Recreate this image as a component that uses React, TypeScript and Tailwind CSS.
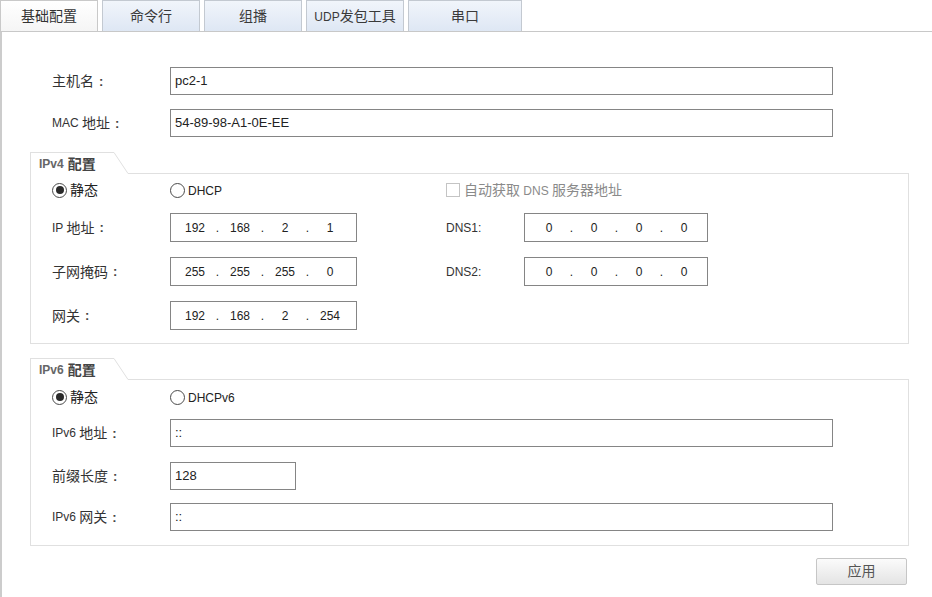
import React from "react";

function Mixed({ text, cjk = "text-[14px]", latin = "text-[12px]" }: { text: string; cjk?: string; latin?: string }) {
  const parts = text.split(/([\u3000-\u9fff\uff00-\uffef]+)/).filter((p) => p.length > 0);
  return (
    <>
      {parts.map((p, i) =>
        /[\u3000-\u9fff\uff00-\uffef]/.test(p) ? (
          <span key={i} className={cjk}>{p}</span>
        ) : (
          <span key={i} className={`${latin} whitespace-pre`}>{p}</span>
        )
      )}
    </>
  );
}

function Tab({ label, active, w }: { label: string; active?: boolean; w: string }) {
  return (
    <div
      className={`${w} h-full flex items-center justify-center border border-b-0 ${
        active
          ? "bg-gradient-to-b from-white to-[#f5f5f5] border-[#c9c9c9] text-[#333]"
          : "bg-gradient-to-b from-[#f1f5fb] to-[#dee7f4] border-[#c3c9d1] text-[#3a3a3a]"
      }`}
    >
      <span className="leading-none">
        <Mixed text={label} />
      </span>
    </div>
  );
}

function TextInput({ value, w }: { value: string; w: string }) {
  return (
    <div className={`${w} h-[28px] border border-[#858585] bg-white flex items-center pl-[4px] text-[13px] text-[#222]`}>
      {value}
    </div>
  );
}

function IpInput({ parts, w }: { parts: string[]; w: string }) {
  return (
    <div className={`${w} h-[29px] border border-[#858585] bg-white flex items-center pl-[6px] text-[12px] text-[#222]`}>
      {parts.map((p, i) => (
        <React.Fragment key={i}>
          {i > 0 && <span className="w-[9px] text-center">.</span>}
          <span className="w-[36px] text-center">{p}</span>
        </React.Fragment>
      ))}
    </div>
  );
}

function Label({ text, colon = true }: { text: string; colon?: boolean }) {
  return (
    <div className="text-[#333] leading-none flex items-center">
      <Mixed text={text} />
      {colon && <span className="pl-[5px] text-[13px] font-bold text-[#444]">:</span>}
    </div>
  );
}

function Radio({ label, checked }: { label: string; checked?: boolean }) {
  return (
    <div className="flex items-center text-[#222]">
      <div className="w-[15px] h-[15px] rounded-full border border-[#4a4a4a] bg-white flex items-center justify-center">
        {checked && <div className="w-[8px] h-[8px] rounded-full bg-[#2a2a2a]" />}
      </div>
      <span className="ml-[3px] leading-none">
        <Mixed text={label} />
      </span>
    </div>
  );
}

function Legend({ title }: { title: string }) {
  const [a, b] = title.split(" ");
  return (
    <div className="flex h-[22px]">
      <div className="w-[84px] border-l border-t border-[#e0e0e0] bg-white flex items-center pl-[8px] font-bold leading-none">
        <span className="text-[12px] text-[#666]">{a}</span>
        <span className="text-[14px] text-[#444] ml-[4px]">{b}</span>
      </div>
      <svg width="14" height="22" className="block">
        <line x1="0" y1="0.5" x2="14" y2="21.5" stroke="#e0e0e0" strokeWidth="1" />
      </svg>
      <div className="flex-1 border-b border-[#e0e0e0]" />
    </div>
  );
}

export default function App() {
  return (
    <div className="w-[932px] h-[597px] bg-white overflow-hidden font-['Liberation_Sans','Noto_Sans_CJK_SC',sans-serif]">
      <div className="h-[32px] flex gap-[4px] border-b border-[#c8c8c8] items-end">
        <Tab label="基础配置" active w="w-[98px]" />
        <Tab label="命令行" w="w-[98px]" />
        <Tab label="组播" w="w-[98px]" />
        <Tab label="UDP发包工具" w="w-[98px]" />
        <Tab label="串口" w="w-[114px]" />
      </div>
      <div className="h-[565px] border-l-2 border-[#cccccc] pl-[28px] pr-[23px] pt-[35px]">
        <div className="flex items-center">
          <div className="w-[140px] pl-[22px]">
            <Label text="主机名" />
          </div>
          <TextInput value="pc2-1" w="w-[663px]" />
        </div>
        <div className="flex items-center mt-[14px]">
          <div className="w-[140px] pl-[22px]">
            <Label text="MAC 地址" />
          </div>
          <TextInput value="54-89-98-A1-0E-EE" w="w-[663px]" />
        </div>

        <div className="mt-[15px]">
          <Legend title="IPv4 配置" />
          <div className="border-l border-r border-b border-[#e0e0e0] pl-[21px] pt-[8px] pb-[13px]">
            <div className="grid grid-cols-[118px_276px_78px_184px] gap-y-[15px] items-center">
              <div className="h-[16px] flex items-center">
                <Radio label="静态" checked />
              </div>
              <div className="h-[16px] flex items-center">
                <Radio label="DHCP" />
              </div>
              <div className="col-span-2 h-[16px] flex items-center">
                <div className="w-[14px] h-[14px] border border-[#c4c4c4] bg-white" />
                <span className="ml-[4px] text-[#8a8a8a] leading-none">
                  <Mixed text="自动获取 DNS 服务器地址" />
                </span>
              </div>

              <Label text="IP 地址" />
              <IpInput parts={["192", "168", "2", "1"]} w="w-[187px]" />
              <div className="text-[12px] text-[#333]">DNS1:</div>
              <IpInput parts={["0", "0", "0", "0"]} w="w-[184px]" />

              <Label text="子网掩码" />
              <IpInput parts={["255", "255", "255", "0"]} w="w-[187px]" />
              <div className="text-[12px] text-[#333]">DNS2:</div>
              <IpInput parts={["0", "0", "0", "0"]} w="w-[184px]" />

              <Label text="网关" />
              <IpInput parts={["192", "168", "2", "254"]} w="w-[187px]" />
            </div>
          </div>
        </div>

        <div className="mt-[14px]">
          <Legend title="IPv6 配置" />
          <div className="border-l border-r border-b border-[#e0e0e0] pl-[21px] pt-[9px] pb-[14px]">
            <div className="flex h-[16px] items-center">
              <div className="w-[118px]">
                <Radio label="静态" checked />
              </div>
              <Radio label="DHCPv6" />
            </div>
            <div className="flex items-center mt-[14px]">
              <div className="w-[118px]">
                <Label text="IPv6 地址" />
              </div>
              <TextInput value="::" w="w-[663px]" />
            </div>
            <div className="flex items-center mt-[15px]">
              <div className="w-[118px]">
                <Label text="前缀长度" />
              </div>
              <TextInput value="128" w="w-[126px]" />
            </div>
            <div className="flex items-center mt-[13px]">
              <div className="w-[118px]">
                <Label text="IPv6 网关" />
              </div>
              <TextInput value="::" w="w-[663px]" />
            </div>
          </div>
        </div>

        <div className="flex justify-end mt-[12px] pr-[2px]">
          <div className="w-[91px] h-[27px] rounded-[2px] border border-[#c6c6c6] bg-gradient-to-b from-[#fbfbfb] to-[#e4e4e4] flex items-center justify-center text-[14px] text-[#555]">
            应用
          </div>
        </div>
      </div>
    </div>
  );
}
